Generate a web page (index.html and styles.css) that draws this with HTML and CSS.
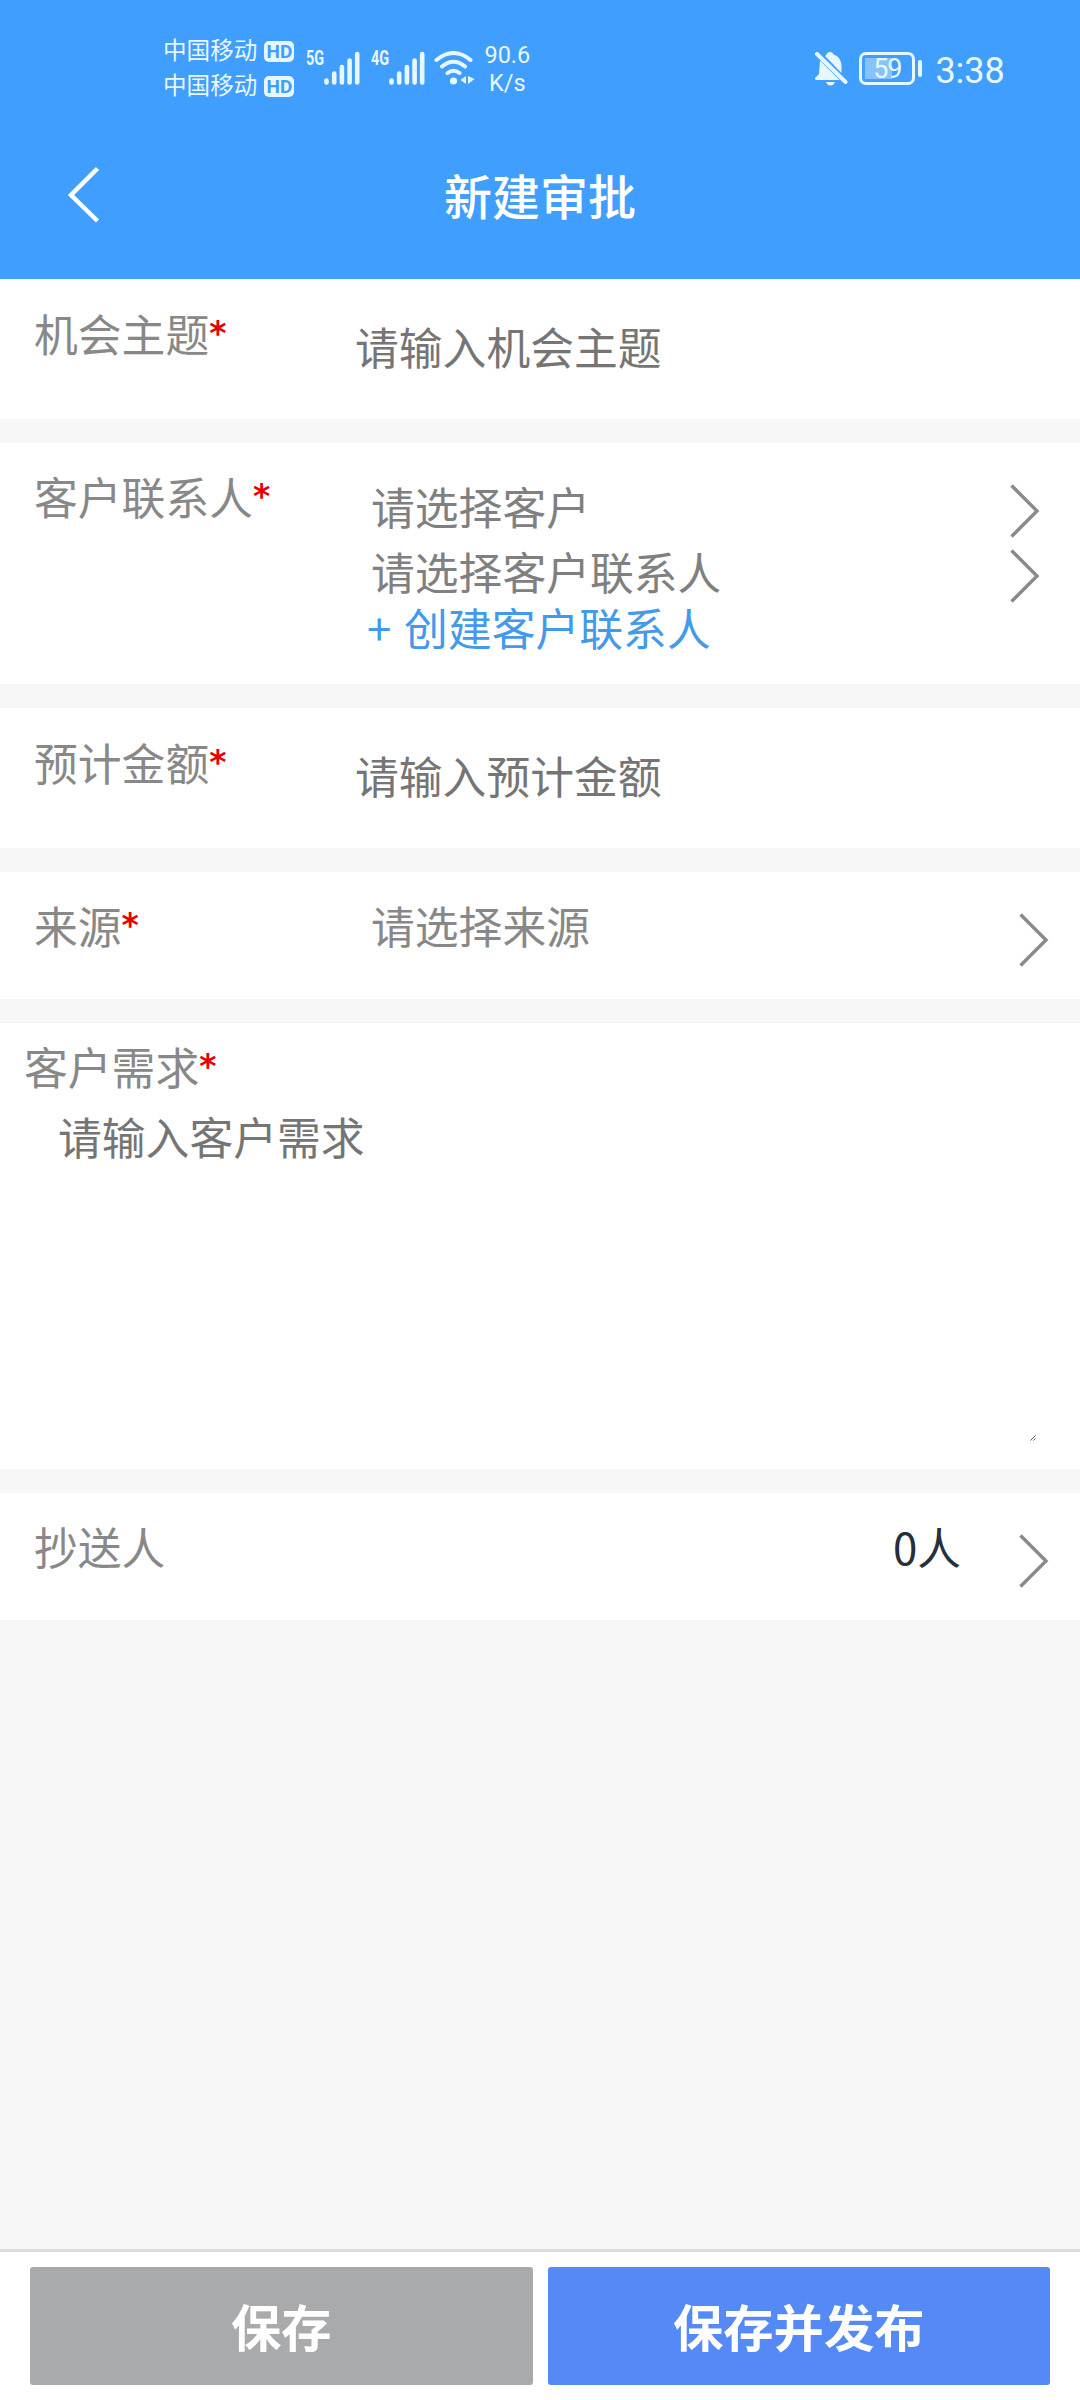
FILE: index.html
```html
<!doctype html>
<html lang="zh-CN">
<head>
    <meta charset="UTF-8">
    <meta name="viewport" content="width=device-width, initial-scale=1.0">
    <title>新建审批</title>
    <link rel="stylesheet" href="styles.css">
</head>
<body>
<div class="page">
    <header class="header">
        <div class="status">
            <div class="carriers">
                <div class="carrier">中国移动<span class="hd">HD</span></div>
                <div class="carrier">中国移动<span class="hd">HD</span></div>
            </div>
            <div class="signal">
                <span class="net">5G</span>
                <svg width="36" height="34" viewBox="0 0 36 34" stroke="#e8f7ff" stroke-width="4.6" stroke-linecap="round">
                    <path d="M2.5 29.5v2M10.2 22.5v9M17.9 16v15.500M25.600 9.500v22M33.200 3v28.500"/>
                </svg>
            </div>
            <div class="signal signal-4g">
                <span class="net">4G</span>
                <svg width="36" height="34" viewBox="0 0 36 34" stroke="#e8f7ff" stroke-width="4.6" stroke-linecap="round">
                    <path d="M2.5 29.5v2M10.2 22.5v9M17.9 16v15.500M25.600 9.500v22M33.200 3v28.500"/>
                </svg>
            </div>
            <svg class="wifi" width="42" height="34" viewBox="0 0 42 34" fill="none" stroke="#e8f7ff" stroke-width="4" stroke-linecap="round">
                <path d="M2.500 9Q19.500-5 36.500 9M8 15.500Q19.500 6 31 15.500M13.500 22Q19.500 17.500 25.500 22"/>
                <circle cx="19.500" cy="30" r="3.600" fill="#e8f7ff" stroke="none"/>
                <path d="M32 25v8l-5.500-4zM34 25v8l6.500-5z" fill="#e8f7ff" stroke="none"/>
            </svg>
            <div class="speed"><span>90.6</span><span>K/s</span></div>
            <svg class="bell" width="34" height="36" viewBox="0 0 34 36">
                <path d="M12.500 3.500Q13 1 16 1t3.500 2.500Q27 6 27.500 14v8L11 5zM6 9.500L25.500 29H2q-2-1.500 0-3l3-3zM12 31h9q-1.500 3.500-4.500 3.500T12 31z" fill="#e8f7ff"/>
                <path d="M3 3l28.500 28" stroke="#e8f7ff" stroke-width="4" stroke-linecap="round"/>
            </svg>
            <div class="battery"><span class="level">59</span></div>
            <div class="battery-cap"></div>
            <div class="time">3:38</div>
        </div>
        <div class="nav">
            <svg class="back" width="36" height="60" viewBox="0 0 36 60" fill="none" stroke="#fff" stroke-width="4.500">
                <path d="M32.500 4.500L6 31L32.500 57"/>
            </svg>
            <h1 class="title">新建审批</h1>
        </div>
    </header>

    <main class="form">
        <section class="row row-input">
            <label class="label" for="subject">机会主题<i>*</i></label>
            <input class="input" id="subject" type="text" placeholder="请输入机会主题">
        </section>

        <section class="row row-contact">
            <span class="label">客户联系人<i>*</i></span>
            <div class="contact">
                <div class="select">请选择客户
                    <svg class="arrow" width="30" height="56" viewBox="0 0 30 56"><path d="M1.500 2.500L27 28L1.500 53.500"/></svg>
                </div>
                <div class="select">请选择客户联系人
                    <svg class="arrow" width="30" height="56" viewBox="0 0 30 56"><path d="M1.500 2.500L27 28L1.500 53.500"/></svg>
                </div>
                <a class="create">+ 创建客户联系人</a>
            </div>
        </section>

        <section class="row row-input">
            <label class="label" for="amount">预计金额<i>*</i></label>
            <input class="input" id="amount" type="text" placeholder="请输入预计金额">
        </section>

        <section class="row row-link">
            <span class="label">来源<i>*</i></span>
            <span class="value">请选择来源</span>
            <svg class="arrow" width="30" height="56" viewBox="0 0 30 56"><path d="M1.500 2.500L27 28L1.500 53.500"/></svg>
        </section>

        <section class="row row-demand">
            <label class="label" for="demand">客户需求<i>*</i></label>
            <div class="demand-box">
                <textarea class="textarea" id="demand" placeholder="请输入客户需求"></textarea>
                <svg class="grip" width="6" height="6" viewBox="0 0 6 6"><path d="M.5 5.500l5-5M3.500 5.500l2-2"/></svg>
            </div>
        </section>

        <section class="row row-link">
            <span class="label">抄送人</span>
            <span class="count">0人</span>
            <svg class="arrow" width="30" height="56" viewBox="0 0 30 56"><path d="M1.500 2.500L27 28L1.500 53.500"/></svg>
        </section>
    </main>

    <footer class="footer">
        <button class="btn btn-save">保存</button>
        <button class="btn btn-publish">保存并发布</button>
    </footer>
</div>
</body>
</html>
```

FILE: styles.css
```css
* {
    box-sizing: border-box;
    margin: 0;
    padding: 0;
}

body {
    font-family: "Noto Sans CJK SC", sans-serif;
    font-size: 43.8px;
    color: #888;
    background-color: #f7f7f7;
}

.page {
    display: flex;
    flex-direction: column;
    height: 2400px;
}

/* 顶部 */
.header {
    height: 279px;
    background-color: #409eff;
    color: #fff;
}

.status {
    display: flex;
    align-items: flex-start;
    height: 134px;
    padding: 33px 0 0 163px;
    color: #e8f7ff;
}

.carrier {
    display: flex;
    align-items: center;
    height: 35px;
    font-size: 23.6px;
    line-height: 33px;
    padding-bottom: 2px;
}

.hd {
    width: 30px;
    height: 21px;
    margin: 3px 0 0 7px;
    border-radius: 5px;
    background-color: #e8f7ff;
    color: #409eff;
    font: bold 19px/21px Roboto, sans-serif;
    text-align: center;
}

.signal {
    display: flex;
    margin: 18px 0 0 12px;
}

.signal-4g {
    margin-left: 11px;
}

.net {
    width: 18px;
    font: bold 20px/15px Roboto, sans-serif;
    transform: scaleX(.72);
    transform-origin: left;
}

.wifi {
    margin: 18px 0 0 9px;
}

.speed {
    display: flex;
    flex-direction: column;
    width: 50px;
    margin: 8px 0 0 6px;
    font: 23.5px/28px Roboto, sans-serif;
    text-align: center;
}

.bell {
    margin: 18px 0 0 282px;
}

.battery {
    width: 56px;
    height: 33px;
    margin: 19px 0 0 11px;
    padding: 3px;
    border: 3px solid #e8f7ff;
    border-radius: 7px;
}

.level {
    display: block;
    height: 21px;
    background: linear-gradient(to right, #86c2ff 27px, transparent 27px);
    font: 27px/22px Roboto, sans-serif;
    letter-spacing: -1px;
    text-align: center;
}

.battery-cap {
    width: 4px;
    height: 17px;
    margin: 27px 0 0 3px;
    border-radius: 2px;
    background-color: #e8f7ff;
}

.time {
    margin: 17px 0 0 13px;
    font: 36px/42px Roboto, sans-serif;
}

.nav {
    display: grid;
    grid-template-columns: 100px 1fr 100px;
    align-items: center;
    height: 119px;
}

.back {
    margin-left: 65px;
}

.title {
    font-size: 48px;
    font-weight: 500;
    line-height: 70px;
    text-align: center;
}

/* 表单 */
.form {
    display: flex;
    flex: 1;
    flex-direction: column;
    gap: 24px;
}

.row {
    display: flex;
    background-color: #fff;
    line-height: 64px;
}

.row-input {
    height: 140px;
    padding: 22px 34px 0;
}

.label {
    width: 321px;
}

.label i {
    color: #e60000;
    font: bold 33px/1 "DejaVu Sans", sans-serif;
    vertical-align: 7px;
}

.input {
    width: 600px;
    height: 64px;
    margin-top: 13px;
    border: none;
    background: none;
    font: inherit;
}

.input::placeholder,
.textarea::placeholder {
    color: #757575;
}

.row-contact {
    height: 241px;
    padding: 21px 40px 0 34px;
}

.contact {
    flex: 1;
    padding: 9px 0 0 16px;
}

.select {
    display: flex;
    justify-content: space-between;
    align-items: center;
    height: 65px;
    color: #808080;
}

.create {
    display: block;
    margin-left: -4px;
    line-height: 48px;
    word-spacing: 3px;
    color: #4399ea;
}

.arrow {
    fill: none;
    stroke: #8a8a8a;
    stroke-width: 3.4;
}

.select .arrow {
    margin-top: 10px;
}

.row-link {
    height: 127px;
    padding: 21px 31px 0 34px;
}

.row-link .arrow {
    margin: 19px 0 0 auto;
}

.value {
    padding-left: 16px;
}

.count {
    margin-left: auto;
    color: #26303b;
}

.row-link .count + .arrow {
    margin-left: 58px;
}

.row-demand {
    flex-direction: column;
    height: 446px;
    padding: 11px 24px 0;
}

.demand-box {
    position: relative;
    width: 1014px;
    height: 346px;
}

.textarea {
    width: 100%;
    height: 100%;
    padding: 6px 34px;
    border: none;
    background: none;
    font: inherit;
    resize: none;
}

.grip {
    position: absolute;
    right: 2px;
    bottom: 3px;
    stroke: #555;
    stroke-width: 1;
}

/* 底部按钮 */
.footer {
    display: flex;
    gap: 15px;
    height: 151px;
    padding: 15px 30px;
    border-top: 3px solid #dcdcdc;
    background-color: #fff;
}

.btn {
    flex: 1;
    height: 118px;
    padding-bottom: 2px;
    border: none;
    border-radius: 3px;
    color: #fff;
    font: bold 50.3px "Noto Sans CJK SC", sans-serif;
}

.btn-save {
    background-color: #a9aaac;
}

.btn-publish {
    background-color: #5589f5;
}
```
